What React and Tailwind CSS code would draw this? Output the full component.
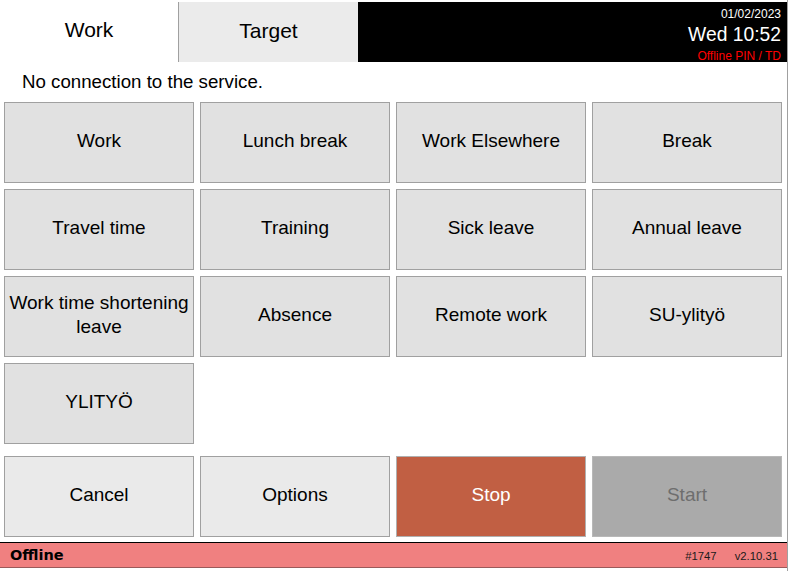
import React from "react";

const activities = [
  "Work",
  "Lunch break",
  "Work Elsewhere",
  "Break",
  "Travel time",
  "Training",
  "Sick leave",
  "Annual leave",
  "Work time shortening leave",
  "Absence",
  "Remote work",
  "SU-ylityö",
  "YLITYÖ",
];

function ActivityButton({ label }) {
  return (
    <button className="h-[81px] pb-[4px] border border-[#a0a0a0] bg-[#e1e1e1] text-[19px] leading-[24px] text-black flex items-center justify-center text-center">
      {label}
    </button>
  );
}

export default function App() {
  return (
    <div
      className="w-[790px] h-[571px] bg-white overflow-hidden"
      style={{ fontFamily: '"Liberation Sans", Arial, sans-serif' }}
    >
      <div className="w-[788px] h-full border-r border-[#a0a0a0] flex flex-col">
        {/* Header with tabs and clock */}
        <div className="h-[62px] flex items-end">
          <div className="w-[178px] h-full pb-[2px] flex items-center justify-center text-[21px] text-black">
            Work
          </div>
          <div className="w-[180px] h-[60px] pb-[2px] bg-[#ebebeb] border-l border-[#a0a0a0] flex items-center justify-center text-[21px] text-black">
            Target
          </div>
          <div className="flex-1 h-[60px] bg-black flex flex-col items-end pr-[6px] pt-[4px]">
            <div className="text-[12px] leading-[16px] text-white">01/02/2023</div>
            <div className="text-[19.3px] leading-[24px] text-white mt-[1px]">Wed 10:52</div>
            <div className="text-[12px] leading-[16px] text-[#ff0000] mt-[1px]">
              Offline PIN / TD
            </div>
          </div>
        </div>

        <div className="h-[40px] pt-[1px] flex items-center pl-[22px] text-[18.7px] text-black">
          No connection to the service.
        </div>

        {/* Activity grid */}
        <div className="px-[4px] grid grid-cols-[repeat(4,190px)] gap-[6px]">
          {activities.map((a) => (
            <ActivityButton key={a} label={a} />
          ))}
        </div>

        {/* Actions */}
        <div className="px-[4px] mt-[12px] grid grid-cols-[repeat(4,190px)] gap-[6px]">
          <button className="h-[81px] pb-[2px] border border-[#a0a0a0] bg-[#eaeaea] text-[19px] text-black">
            Cancel
          </button>
          <button className="h-[81px] pb-[2px] border border-[#a0a0a0] bg-[#eaeaea] text-[19px] text-black">
            Options
          </button>
          <button className="h-[81px] pb-[2px] border border-[#b0b0b0] bg-[#c15f43] text-[19px] text-white">
            Stop
          </button>
          <button className="h-[81px] pb-[2px] border border-[#b8b8b8] bg-[#aaaaaa] text-[19px] text-[#6e6e6e]">
            Start
          </button>
        </div>

        {/* Status bar */}
        <div className="mt-[5px] h-[26px] pt-[2px] bg-[#f08080] border-t border-black border-b border-b-[#9a5a5a] flex items-center pl-[10px] pr-[9px]">
          <span
            className="font-bold text-[14.5px] text-black"
            style={{ fontFamily: '"DejaVu Sans", sans-serif' }}
          >
            Offline
          </span>
          <span className="ml-auto text-[11.3px] text-[#1a1a1a]">#1747</span>
          <span className="ml-[18px] text-[11.3px] text-[#1a1a1a]">v2.10.31</span>
        </div>
      </div>
    </div>
  );
}
